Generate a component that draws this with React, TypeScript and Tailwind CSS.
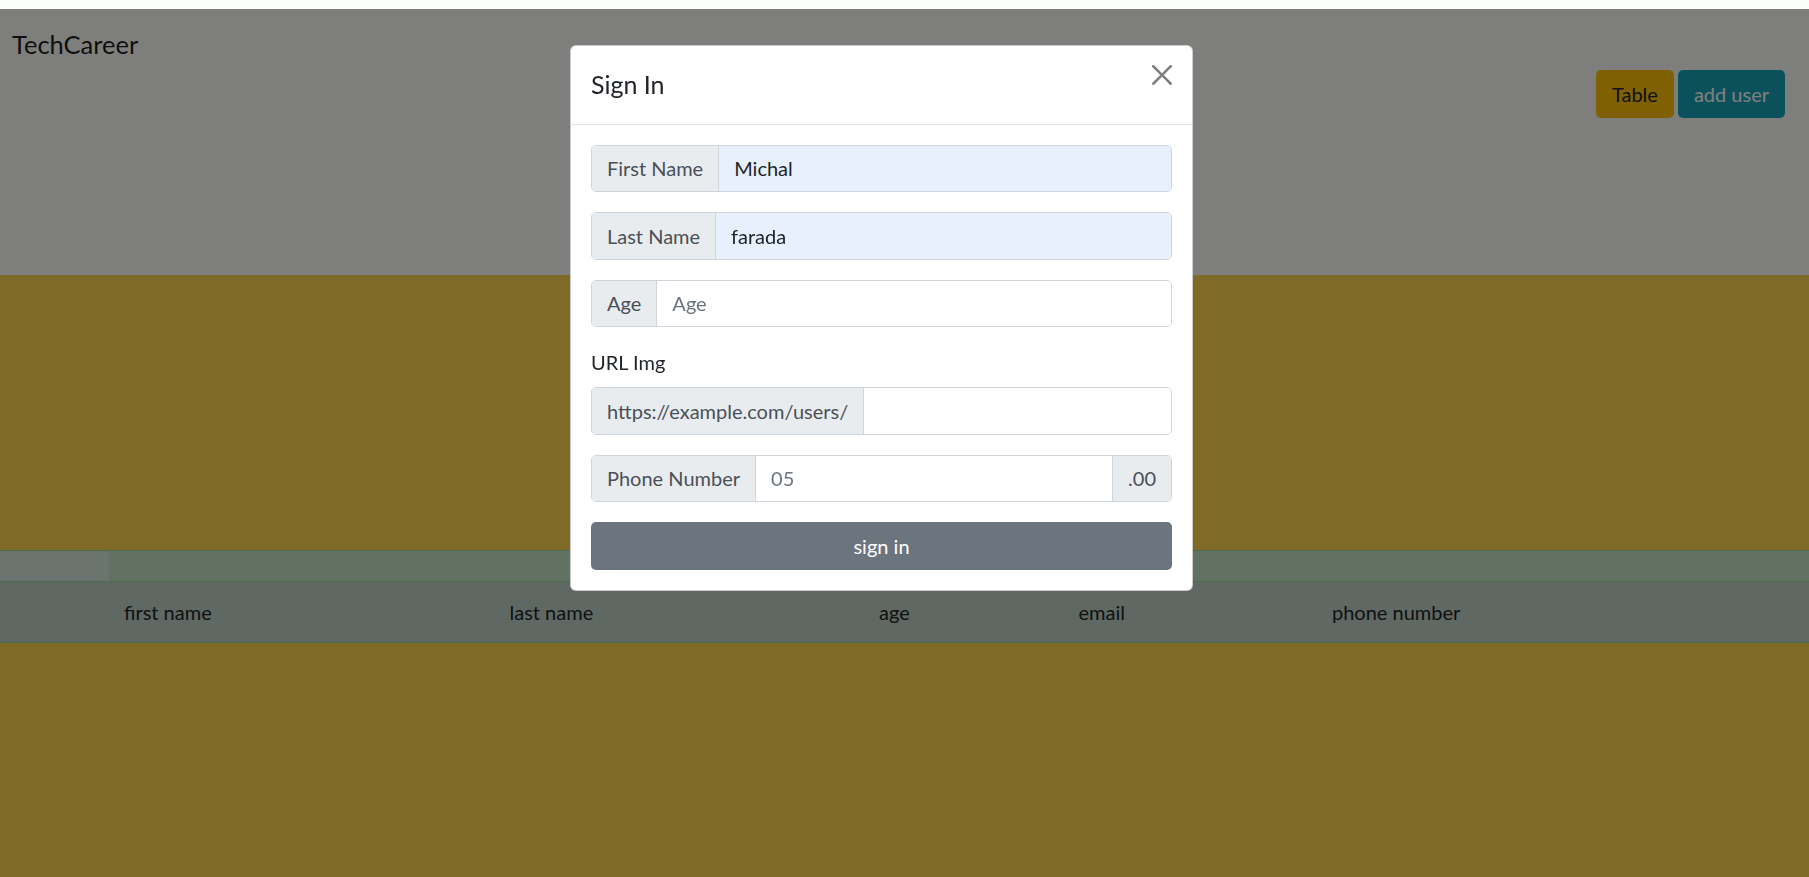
import React from 'react'

const cols = 'grid grid-cols-[109px_385.5px_369.5px_199.5px_253.5px_1fr]'

const heads = ['first name', 'last name', 'age', 'email', 'phone number']

const InputGroup = ({
  label,
  value,
  placeholder,
  filled,
  append,
}: {
  label: string
  value?: string
  placeholder?: string
  filled?: boolean
  append?: string
}) => (
  <div className="flex h-[47.5px] overflow-hidden rounded-[5px] border border-[#ced4da] text-[20px]">
    <span className="flex items-center border-r border-[#ced4da] bg-[#e9ecef] px-[15px] whitespace-nowrap text-[#495057]">
      {label}
    </span>
    <input
      className={
        'min-w-0 flex-1 px-[15px] text-[#212529] outline-none placeholder:text-[#6c757d] ' +
        (filled ? 'bg-[#e8f0fe]' : 'bg-white')
      }
      defaultValue={value}
      placeholder={placeholder}
    />
    {append && (
      <span className="flex items-center border-l border-[#ced4da] bg-[#e9ecef] px-[15px] text-[#495057]">
        {append}
      </span>
    )}
  </div>
)

export default function App() {
  return (
    <div className="relative min-h-screen bg-[#ffd54f] font-['Lato',sans-serif] text-[#212529]">
      <header className="h-[275px] bg-[#fdfffb] pt-[25.5px]">
        <div className="pl-[12px] text-[25.5px] leading-[37.5px] text-black/90">TechCareer</div>
        <div className="mt-[7px] flex justify-end gap-[4px] pr-[24px]">
          <button className="h-[48px] rounded-[5px] bg-[#ffc107] px-[16px] text-[20px] text-[#212529]">
            Table
          </button>
          <button className="h-[48px] rounded-[5px] bg-[#17a2b8] px-[16px] text-[20px] text-white">
            add user
          </button>
        </div>
      </header>

      <section className="h-[275px]" />

      <div className="border-t border-[#96d69a]">
        <div className={cols + ' h-[31px] border-b border-[#96d69a] bg-[#c2e4c4]'}>
          <div className="bg-[#d6e8de]" />
        </div>
        <div className={cols + ' h-[61px] items-center border-b border-[#96d69a] bg-[#bed0c6] text-[20px] text-[#212529]'}>
          <div />
          {heads.map((h) => (
            <div key={h} className="pl-[15px]">
              {h}
            </div>
          ))}
        </div>
      </div>

      <div className="fixed inset-x-0 top-[9px] bottom-0 bg-black/50">
        <div className="absolute top-[36px] left-[570px] w-[623px] rounded-[6px] border border-black/20 bg-white">
          <div className="flex items-start justify-between border-b border-[#dee2e6] p-[20px]">
            <h5 className="text-[25px] leading-[37.5px] text-[#212529]">Sign In</h5>
            <button className="mt-[-1px] h-[20px] w-[20px] opacity-50">
              <svg viewBox="0 0 16 16" width="20" height="20" fill="#000">
                <path d="M.293.293a1 1 0 0 1 1.414 0L8 6.586 14.293.293a1 1 0 1 1 1.414 1.414L9.414 8l6.293 6.293a1 1 0 0 1-1.414 1.414L8 9.414l-6.293 6.293a1 1 0 0 1-1.414-1.414L6.586 8 .293 1.707a1 1 0 0 1 0-1.414z" />
              </svg>
            </button>
          </div>
          <div className="flex flex-col p-[20px]">
            <InputGroup label="First Name" value="Michal" filled />
            <div className="h-[20px]" />
            <InputGroup label="Last Name" value="farada" filled />
            <div className="h-[20px]" />
            <InputGroup label="Age" placeholder="Age" />
            <label className="mt-[20px] mb-[10px] text-[20px] leading-[30px] text-[#212529]">URL Img</label>
            <InputGroup label="https://example.com/users/" />
            <div className="h-[20px]" />
            <InputGroup label="Phone Number" placeholder="05" append=".00" />
            <button className="mt-[20px] h-[47.5px] w-full rounded-[5px] bg-[#6c757d] text-[20px] text-white">
              sign in
            </button>
          </div>
        </div>
      </div>
    </div>
  )
}
